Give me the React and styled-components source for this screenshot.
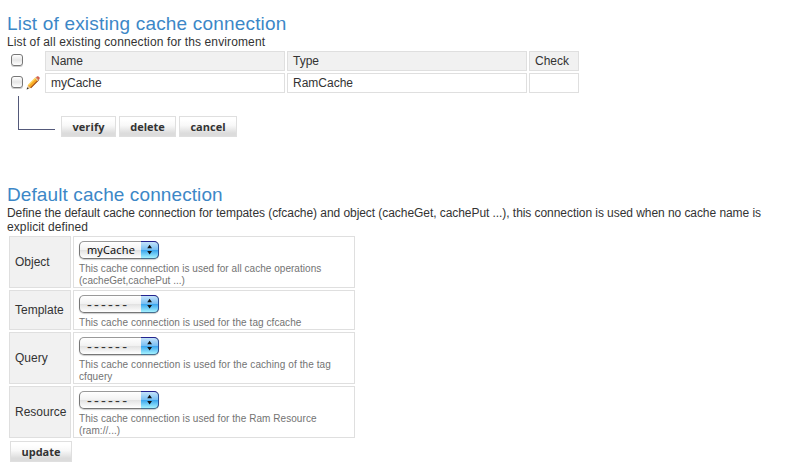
import React from "react";
import styled, { createGlobalStyle } from "styled-components";

const Global = createGlobalStyle`
  * { box-sizing: border-box; }
  body {
    margin: 0;
    background: #fff;
    color: #333;
    font: 12px/14px "Liberation Sans", Arial, sans-serif;
  }
`;

const Page = styled.main`
  width: 786px;
  height: 471px;
  padding: 12px 9px 0 7px;
  overflow: hidden;
`;

const Heading = styled.h2`
  margin: 0;
  height: 23px;
  font-size: 19px;
  line-height: 23px;
  font-weight: 400;
  color: #3c87c7;
  white-space: nowrap;
  letter-spacing: ${(p) => p.$track || 0}px;
`;

const Lead = styled.p`
  margin: 0;
  white-space: nowrap;
  letter-spacing: ${(p) => p.$track || 0}px;
`;

const ConnectionGrid = styled.div`
  display: grid;
  grid-template-columns: 34px 240px 240px 50px;
  grid-auto-rows: 20px;
  gap: 2px;
  margin: 2px 0 0 2px;
`;

const Cell = styled.div`
  display: flex;
  align-items: center;
  padding: 0 5px;
  border: 1px solid #dfdfdf;
  background: ${(p) => (p.$head ? "#f1f1f1" : "#fff")};
`;

const Tools = styled.div`
  display: flex;
  align-items: flex-start;
  gap: 3px;
  padding: 3px 0 0 2px;
`;

const Check = styled.button`
  width: 12px;
  height: 12px;
  padding: 0;
  border: 1px solid #777;
  border-radius: 3px;
  background: linear-gradient(#fff, #e6e6e6 50%, #fff);
  box-shadow: 0 1px 0 #ccc;
`;

const Actions = styled.div`
  display: flex;
  height: 41px;
  margin: 3px 0 0 11px;
`;

const Branch = styled.div`
  width: 37px;
  height: 34px;
  margin-right: 6px;
  border: solid #54597a;
  border-width: 0 0 1px 1px;
`;

const Buttons = styled.div`
  display: flex;
  gap: 3px;
  padding-top: 20px;
`;

const Button = styled.button`
  width: ${(p) => p.$width}px;
  height: 21px;
  padding: 0;
  border: 1px solid #dfdfdf;
  background: linear-gradient(#fff 15%, #f8f8f8 45%, #dcdcdc 85%);
  color: #333;
  font: 700 11px/19px "Open Sans", "Noto Sans", sans-serif;
  letter-spacing: ${(p) => p.$track || 0}px;
`;

const Defaults = styled.section`
  padding-top: 46px;
`;

const Settings = styled.div`
  display: grid;
  grid-template-columns: 62px 282px;
  grid-template-rows: 52px 40px 52px 52px;
  gap: 2px;
  margin: 2px 0 3px 2px;
`;

const Setting = styled(Cell)`
  flex-direction: column;
  align-items: flex-start;
  justify-content: flex-start;
  padding-top: 4px;
`;

const Select = styled.button`
  display: flex;
  width: 80px;
  height: 18px;
  padding: 0;
  flex: none;
  border: 1px solid #777;
  border-top-color: #999;
  border-radius: 5px;
  background: linear-gradient(#fff, #f2f2f2 48%, #e2e2e2 52%, #fff);
  box-shadow: 0 1px 1px #ccc;
  color: #000;
  font: 500 11px/16px "Open Sans", "Noto Sans", sans-serif;
  letter-spacing: 0.15px;
`;

const Value = styled.span`
  width: 61px;
  flex: none;
  padding-left: 7px;
  text-align: left;
  white-space: nowrap;
`;

const EmptyValue = styled(Value)`
  font-size: 15px;
  letter-spacing: 2.2px;
  color: #333;
`;

const Stepper = styled.span`
  display: block;
  width: 18px;
  height: 18px;
  flex: none;
  margin-top: -1px;
  border: solid #23238e;
  border-width: 1px 1px 1px 0;
  border-right-color: #2a4f94;
  border-bottom-color: #456f91;
  border-radius: 0 5px 5px 0;
  background: linear-gradient(#c5e3fa, #78bff3 48%, #3ba6ee 52%, #a5f2ff);
`;

const Help = styled.p`
  margin: 4px 0 0;
  color: #737373;
  font-size: 10px;
  line-height: 12px;
  white-space: pre;
  letter-spacing: ${(p) => p.$track || 0}px;
`;

const UpdateRow = styled.div`
  padding-left: 3px;
`;

const PencilIcon = styled.svg`
  display: block;
  flex: none;
`;

const Pencil = () => (
  <PencilIcon width="14" height="14" viewBox="0 0 14 14">
    <path d="M1.2 12.8 2.2 9.3 9.8 1.5 12.6 4.2 4.9 11.9Z" fill="#f7a823" />
    <path d="M2.4 9.3 9.8 1.8" stroke="#ffd65c" strokeWidth="1.3" />
    <path d="M4.7 11.8 12.4 4.1" stroke="#9c4a1c" strokeWidth="1.1" />
    <path d="m10.1 1.5 1.1-1q1.5-.2 2.4 1.4l-1 2.2Z" fill="#e0604c" stroke="#a35445" strokeWidth=".4" />
    <path d="m9.3 2.1 2.7 2.6" stroke="#d8d8d8" strokeWidth="1" />
    <path d="m1.2 12.8.9-3.1 2.3 2.1Z" fill="#dbc3a5" />
    <path d="m.6 13.4.6-2.1 1.6 1.4Z" fill="#333" />
  </PencilIcon>
);

const ArrowsIcon = styled.svg`
  display: block;
`;

const Arrows = () => (
  <ArrowsIcon width="17" height="16" viewBox="0 0 17 16">
    <path d="m8.6 2.7 2.4 3.5H6.2ZM8.6 12.5 11 9H6.2Z" fill="#111" />
  </ArrowsIcon>
);

const settings = [
  { name: "Object", value: "myCache", track: 0.04, help: "This cache connection is used for all cache operations\n(cacheGet,cachePut ...)" },
  { name: "Template", track: 0.07, help: "This cache connection is used for the tag cfcache" },
  { name: "Query", track: 0.09, help: "This cache connection is used for the caching of the tag\ncfquery" },
  { name: "Resource", track: 0.06, help: "This cache connection is used for the Ram Resource\n(ram://...)" },
];

export default function App() {
  return (
    <Page>
      <Global />
      <section>
        <Heading $track={0.18}>List of existing cache connection</Heading>
        <Lead $track={0.12}>List of all existing connection for ths enviroment</Lead>
        <ConnectionGrid>
          <Tools><Check aria-label="Select all" /></Tools>
          <Cell $head>Name</Cell>
          <Cell $head>Type</Cell>
          <Cell $head>Check</Cell>
          <Tools><Check aria-label="Select myCache" /><Pencil /></Tools>
          <Cell>myCache</Cell>
          <Cell>RamCache</Cell>
          <Cell />
        </ConnectionGrid>
        <Actions>
          <Branch />
          <Buttons>
            <Button $width={55} $track={0.1}>verify</Button>
            <Button $width={57}>delete</Button>
            <Button $width={58}>cancel</Button>
          </Buttons>
        </Actions>
      </section>
      <Defaults>
        <Heading $track={0.1}>Default cache connection</Heading>
        <Lead $track={-0.06}>
          Define the default cache connection for tempates (cfcache) and object (cacheGet, cachePut ...), this connection is used when no cache name is
        </Lead>
        <Lead $track={0.1}>explicit defined</Lead>
        <Settings>
          {settings.map((s) => (
            <React.Fragment key={s.name}>
              <Cell $head>{s.name}</Cell>
              <Setting>
                <Select>
                  {s.value ? <Value>{s.value}</Value> : <EmptyValue>------</EmptyValue>}
                  <Stepper><Arrows /></Stepper>
                </Select>
                <Help $track={s.track}>{s.help}</Help>
              </Setting>
            </React.Fragment>
          ))}
        </Settings>
        <UpdateRow><Button $width={62}>update</Button></UpdateRow>
      </Defaults>
    </Page>
  );
}
